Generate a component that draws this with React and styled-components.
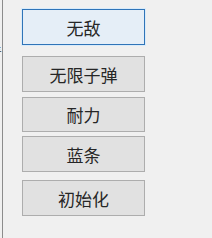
import React from "react";
import styled, { createGlobalStyle } from "styled-components";

const Global = createGlobalStyle`
  html, body { margin: 0; padding: 0; background: #f0f0f0; }
  body { width: 212px; height: 238px; overflow: hidden; }
`;

const Page = styled.div`
  display: flex;
  width: 212px;
  height: 238px;
  background: #f0f0f0;
  font-family: "Noto Sans CJK SC", "Noto Sans", sans-serif;
`;

const Edge = styled.div`
  width: 2px;
  border-right: 1px solid #8c8c8c;
  position: relative;
  overflow: hidden;
`;

const Clipped = styled.span`
  position: absolute;
  right: 0;
  top: 44px;
  font-size: 14px;
  color: #333;
  line-height: 16px;
`;

const Column = styled.div`
  display: flex;
  flex-direction: column;
  padding-left: 19px;
  padding-top: 9px;
`;

const Button = styled.button`
  box-sizing: border-box;
  width: 123px;
  height: ${(p) => p.$h || 36}px;
  margin-top: ${(p) => p.$mt || 0}px;
  padding: 0;
  font-family: "Noto Sans CJK SC", "Noto Sans", sans-serif;
  font-size: 17px;
  font-weight: 400;
  color: #262626;
  border: 1px solid ${(p) => (p.$active ? "#2f74b8" : "#adadad")};
  background: ${(p) => (p.$active ? "#e5eef7" : "#e1e1e1")};
  box-shadow: ${(p) => (p.$active ? "0 0 0 1px #d9ebfa" : "none")};
  display: flex;
  align-items: center;
  justify-content: center;
  outline: none;
`;

export default function App() {
  return (
    <>
      <Global />
      <Page>
        <Edge>
          <Clipped>青</Clipped>
        </Edge>
        <Column>
          <Button $active>无敌</Button>
          <Button $mt={11}>无限子弹</Button>
          <Button $mt={5} $h={35}>耐力</Button>
          <Button $mt={4}>蓝条</Button>
          <Button $mt={8}>初始化</Button>
        </Column>
      </Page>
    </>
  );
}
